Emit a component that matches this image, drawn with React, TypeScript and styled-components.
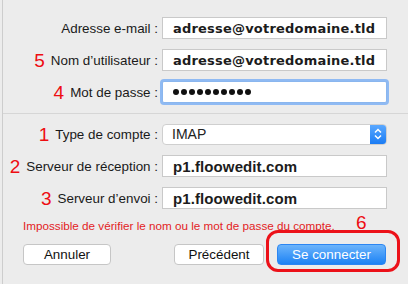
import React, { FC } from 'react';
import styled, { createGlobalStyle } from 'styled-components';

const GlobalStyle = createGlobalStyle`
  html, body {
    margin: 0;
    padding: 0;
    background: #ececec;
  }
  body {
    font-family: 'Liberation Sans', Arial, sans-serif;
    color: #1a1a1a;
  }
`;

const Panel = styled.div`
  position: relative;
  margin-left: 2px;
  height: 284px;
  border-left: 1px solid #cdcdcd;
  box-sizing: border-box;
  padding-top: 17px;
`;

const Section = styled.div`
  display: flex;
  flex-direction: column;
  gap: 10px;
`;

const Separator = styled.div`
  height: 1px;
  background: #d6d6d6;
  margin: 10px 0 9px;
`;

const Row = styled.div`
  display: flex;
  align-items: center;
  height: 22px;
`;

const Label = styled.div`
  width: 159px;
  box-sizing: border-box;
  padding-right: 4px;
  display: flex;
  align-items: center;
  justify-content: flex-end;
  font-size: 13.4px;
  white-space: nowrap;
`;

const Num = styled.span`
  color: #ee0d12;
  font-size: 19px;
  margin-right: 6px;
  line-height: 1;
`;

const Field = styled.div<{ $focused?: boolean; $bold?: boolean; $wide?: boolean }>`
  width: 225px;
  height: 22px;
  box-sizing: border-box;
  background: #fff;
  border: 1px solid ${(p) => (p.$focused ? '#8ab6ee' : '#c9c9c9')};
  box-shadow: ${(p) => (p.$focused ? '0 0 0 2px #8fbaf3' : 'none')};
  border-radius: ${(p) => (p.$focused ? '2px' : '0')};
  display: flex;
  align-items: center;
  padding-left: 10px;
  font-family: ${(p) => (p.$wide ? "'DejaVu Sans', Verdana, sans-serif" : "'Liberation Sans', Arial, sans-serif")};
  font-weight: ${(p) => (p.$bold ? 700 : 400)};
  font-size: ${(p) => (p.$wide ? '13px' : '15px')};
  letter-spacing: ${(p) => (p.$wide ? '0.2px' : '0.1px')};
  color: #1c1c1c;
`;

const Dots = styled.div`
  display: flex;
  gap: 2px;
`;

const Dot = styled.span`
  width: 6px;
  height: 6px;
  border-radius: 50%;
  background: #111;
`;

const Popup = styled.div`
  width: 225px;
  height: 21px;
  box-sizing: border-box;
  display: flex;
  background: #fff;
  border: 1px solid #cfcfcf;
  border-radius: 4px;
  overflow: hidden;
  font-size: 14px;
`;

const PopupValue = styled.div`
  flex: 1;
  display: flex;
  align-items: center;
  padding-left: 9px;
  color: #222;
`;

const PopupArrow = styled.div`
  width: 16px;
  background: linear-gradient(#5aa8ff, #1b7cf4);
  display: flex;
  align-items: center;
  justify-content: center;
`;

const ErrorText = styled.div`
  margin: 10px 0 0 20px;
  height: 14px;
  font-size: 11.7px;
  color: #e3231f;
  white-space: nowrap;
`;

const Buttons = styled.div`
  display: flex;
  align-items: center;
  margin: 11px 22px 0 20px;
  gap: 13px;
`;

const Button = styled.button<{ $primary?: boolean; $w: number }>`
  width: ${(p) => p.$w}px;
  height: 21px;
  box-sizing: border-box;
  border-radius: 4px;
  font-family: 'Liberation Sans', Arial, sans-serif;
  font-size: 13.4px;
  padding: 0;
  border: 1px solid ${(p) => (p.$primary ? '#2c86f2' : '#c6c6c6')};
  background: ${(p) => (p.$primary ? 'linear-gradient(#6cb4fb, #1c82f5)' : '#fff')};
  color: ${(p) => (p.$primary ? '#fff' : '#111')};
  &:first-child {
    margin-right: auto;
  }
`;

const Highlight = styled.div`
  position: absolute;
  left: 263px;
  top: 230px;
  width: 134px;
  height: 42px;
  box-sizing: border-box;
  border: 3px solid #ec1119;
  border-radius: 12px;
`;

const HighlightNum = styled.span`
  position: absolute;
  left: 353px;
  top: 212px;
  color: #ee0d12;
  font-size: 19px;
`;

const Arrows: FC = () => (
  <svg width="10" height="14" viewBox="0 0 10 14">
    <path d="M2 5.5 L5 2.5 L8 5.5 M2 8.5 L5 11.5 L8 8.5" fill="none" stroke="#fff" strokeWidth="1.5" />
  </svg>
);

const App: FC = () => (
  <>
    <GlobalStyle />
    <Panel>
      <Section>
        <Row>
          <Label>Adresse e-mail :</Label>
          <Field $bold $wide>adresse@votredomaine.tld</Field>
        </Row>
        <Row>
          <Label>
            <Num>5</Num>Nom d’utilisateur :
          </Label>
          <Field $bold $wide>adresse@votredomaine.tld</Field>
        </Row>
        <Row>
          <Label>
            <Num>4</Num>Mot de passe :
          </Label>
          <Field $focused>
            <Dots>
              {Array.from({ length: 10 }).map((_, i) => (
                <Dot key={i} />
              ))}
            </Dots>
          </Field>
        </Row>
      </Section>
      <Separator />
      <Section>
        <Row>
          <Label>
            <Num>1</Num>Type de compte :
          </Label>
          <Popup>
            <PopupValue>IMAP</PopupValue>
            <PopupArrow>
              <Arrows />
            </PopupArrow>
          </Popup>
        </Row>
        <Row>
          <Label>
            <Num>2</Num>Serveur de réception :
          </Label>
          <Field $bold>p1.floowedit.com</Field>
        </Row>
        <Row>
          <Label>
            <Num>3</Num>Serveur d’envoi :
          </Label>
          <Field $bold>p1.floowedit.com</Field>
        </Row>
      </Section>
      <ErrorText>Impossible de vérifier le nom ou le mot de passe du compte.</ErrorText>
      <Buttons>
        <Button $w={88}>Annuler</Button>
        <Button $w={90}>Précédent</Button>
        <Button $w={109} $primary>
          Se connecter
        </Button>
      </Buttons>
      <HighlightNum>6</HighlightNum>
      <Highlight />
    </Panel>
  </>
);

export default App;
